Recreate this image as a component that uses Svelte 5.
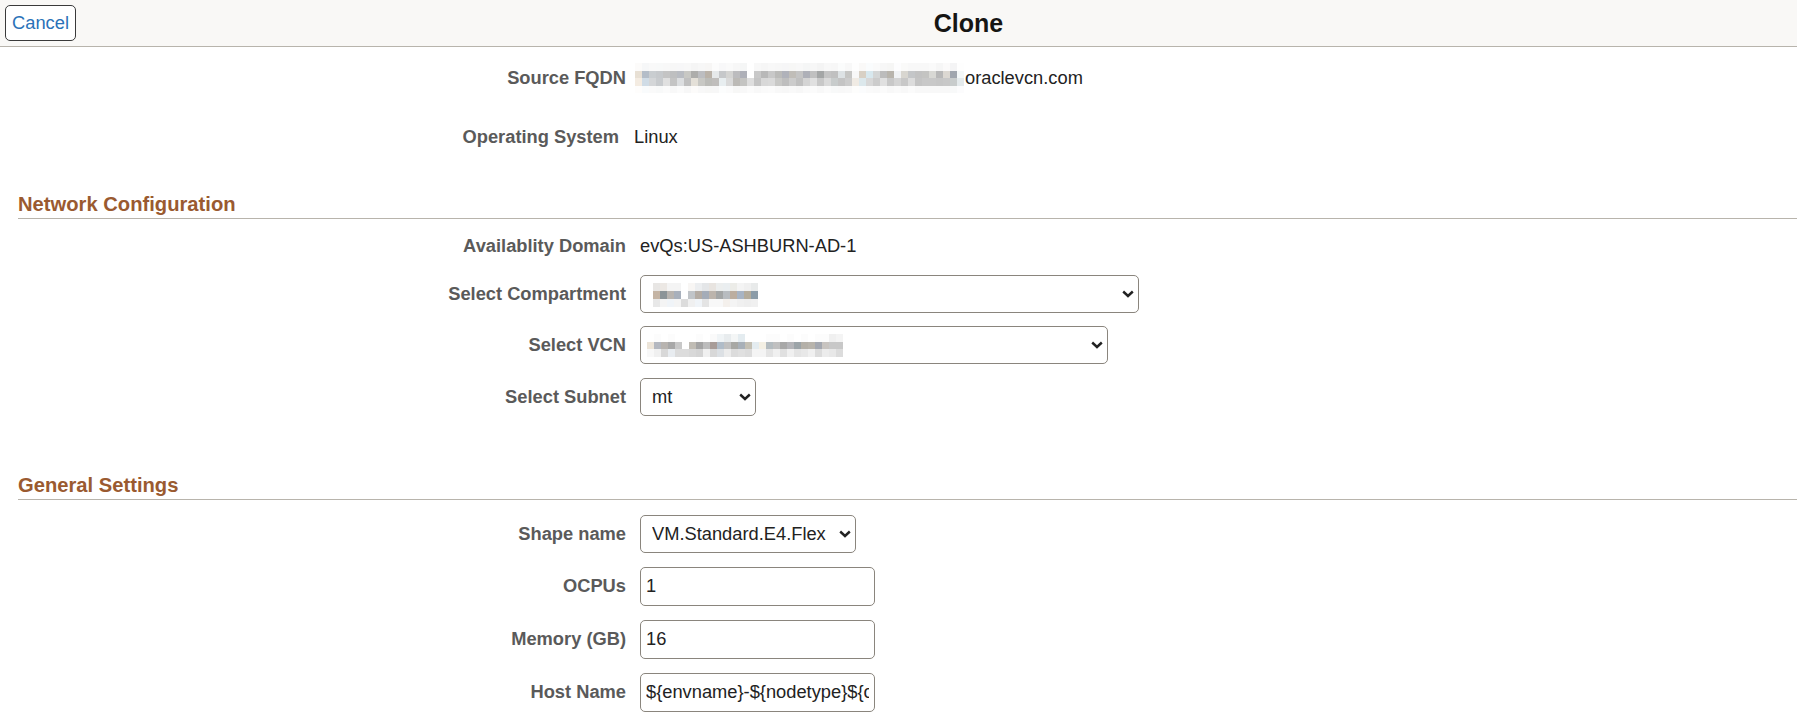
<script>
  // pixelated (redacted) strings, one array per row of blocks
  const fqdn = [
    "e8e0d4 b4bdc8 c9cdd0 c6c9cc c4c4c4 bebfc0 b9bcc2 c8c8c4 adadab bcbdc0 bab2a8 e6e9ea c6c8ca d4d4d2 bcbcbe aeb0b8 ffffff c8c8c8 b8b8b8 c8c8c8 bbbbb9 b0b2ba c0bdb8 c4c4c4 aeb0b8 c0c0c0 a4a6a6 c4c4c4 c0c0c0 dde2e4 c6c6c4 f8f8f8 d8d0c4 d8e8ee d4d6d6 bcbcbc b8b4ac f0f2f4 d8d6d0 c4c6c8 c2c2c2 c4c4c2 d8d8d4 b8b8b8 dcd8d2 a0a6ae f4f8f8",
    "f4ece2 d0dce6 d4d6d8 c8cbce e0e0e0 c4c4c4 dcdee0 c0c0c0 e4e0d8 c8c8c4 bcbcb8 c0bebc e8eef0 dadada bcbab6 c4c4c2 dedede c4c4c4 d8d8d8 dadada c8c8c6 bebebe cccccc c0c0c0 d4d4d4 e0e0e0 c8c8c8 dadada c8cccc c4c4c4 cccccc f0ebe4 dce8ec d8d8d8 cccccc e0e0e0 c8c8c8 d4d4d4 c8c8c8 dcdcdc c4c4c4 c8c8c8 c8c8c8 c6c6c6 c8c8c8 c8cccc e4eaec"
  ].map((r) => r.split(" "));

  const compartment = [
    "e8e6e4 ece8e4 f4f4f4 f4f4f4 ffffff f8f6f4 eceef0 e4e6e8 e8e4e0 eceeee eaeef0 ecece8 f4f4f4 f0f0f0 e8eaea",
    "c4b4a4 8c9498 b8b4b0 a8b0bc ffffff c0c4c8 b4aca4 a4acb8 bcb4ac a4a6a6 b8bcc0 bcaea0 a8b4c4 b4ac9c 8c9ca8",
    "e8e8e8 f4f4f4 f0f4f8 f4f4f4 dcdcdc f0f0f0 f0f4f8 e4e4e4 f8f8f8 f8f8f8 f4f0ec f4f4f4 f0f0f0 eeeeee f0f0f0"
  ].map((r) => r.split(" "));

  const vcn = [
    "ffffff fcfcfc ffffff fcfcfc ffffff ffffff ffffff fcfcfc ffffff fafafa f0f4f6 e8ecee f4f6f6 e4ecf0 ffffff ffffff ffffff fcfcfc fcfcfc ffffff fcfcfc ffffff fcfcfc ffffff fcfcfc fcfcfc f0f0f0 f4f4f4",
    "ece4d8 b4b8c0 b8b4b0 a8a8a8 c8c8c8 ffffff c0bcb4 a4a4a4 bcbcbc a89c98 b0bcc8 c0c0c0 a8a8a4 a8b0b8 c4c0b4 e4ecf0 f4f0e4 b4bcc0 c0c0c0 a8a8a8 b4b4b8 9ca4a8 b4b0a8 b8b4ac a4a8b0 c8c4c0 c8c8c8 c8c8c8",
    "f8f8f8 f0f0f0 d8d8d8 e8ecf0 dcdcdc dcdcdc d8d8d8 d4d4d4 f0f0f0 d8d8d8 dce0e4 ececec dcdcdc e0e0e0 dcdcdc f4f4f4 f4f4f4 e4e4e4 f0f0f0 e0e0e0 f0f0f0 e4e4e4 e8e8e8 f0f0f0 dcdcdc ececec e8e8e8 dcdcdc"
  ].map((r) => r.split(" "));

  const shade = (c) =>
    c.match(/../g).map((h) => Math.round(255 - (255 - parseInt(h, 16)) * 0.12).toString(16).padStart(2, "0")).join("");

  // fqdn has a faint halo above and below its two solid rows
  const fqdnRows = [fqdn[0].map(shade), fqdn[0], fqdn[1], fqdn[1].map(shade)];
</script>

{#snippet blur(rows, h)}
  <svg class="blur" width={rows[0].length * 7} height={rows.length * h} shape-rendering="crispEdges" aria-hidden="true">
    {#each rows as row, y}
      {#each row as c, x}
        <rect x={x * 7} y={y * h} width="7" height={h} fill={"#" + c} />
      {/each}
    {/each}
  </svg>
{/snippet}

{#snippet chevron()}
  <svg class="chevron" width="12" height="8" viewBox="0 0 12 8" aria-hidden="true">
    <path d="M1.2 1.5 6 6 10.8 1.5" fill="none" stroke="#222" stroke-width="2.4" />
  </svg>
{/snippet}

<header>
  <button class="cancel">Cancel</button>
  <h1>Clone</h1>
</header>

<main>
  <section class="source">
    <div class="row">
      <span class="label">Source FQDN</span>
      <span class="value fqdn">{@render blur(fqdnRows, 7.5)}<span class="domain">oraclevcn.com</span></span>
    </div>
    <div class="row os">
      <span class="label">Operating System</span>
      <span class="value">Linux</span>
    </div>
  </section>

  <h2 class="first">Network Configuration</h2>
  <section class="fields network">
    <div class="row">
      <span class="label">Availablity Domain</span>
      <span class="value">evQs:US-ASHBURN-AD-1</span>
    </div>
    <div class="row">
      <span class="label">Select Compartment</span>
      <div class="select wide">
        <select aria-label="Select Compartment"><option></option></select>
        <span class="mask compartment">{@render blur(compartment, 8)}</span>
        {@render chevron()}
      </div>
    </div>
    <div class="row">
      <span class="label">Select VCN</span>
      <div class="select vcn">
        <select aria-label="Select VCN"><option></option></select>
        <span class="mask vcn-mask">{@render blur(vcn, 7.7)}</span>
        {@render chevron()}
      </div>
    </div>
    <div class="row">
      <span class="label">Select Subnet</span>
      <div class="select subnet">
        <select aria-label="Select Subnet"><option>mt</option></select>
        {@render chevron()}
      </div>
    </div>
  </section>

  <h2 class="second">General Settings</h2>
  <section class="fields general">
    <div class="row">
      <span class="label">Shape name</span>
      <div class="select shape">
        <select aria-label="Shape name"><option>VM.Standard.E4.Flex</option></select>
        {@render chevron()}
      </div>
    </div>
    <div class="row">
      <span class="label">OCPUs</span>
      <input value="1" aria-label="OCPUs" />
    </div>
    <div class="row">
      <span class="label">Memory (GB)</span>
      <input value="16" aria-label="Memory (GB)" />
    </div>
    <div class="row">
      <span class="label">Host Name</span>
      <input value={"${envname}-${nodetype}${count}"} aria-label="Host Name" />
    </div>
  </section>
</main>

<style>
  :global(body) {
    background: #fff;
    font-family: "Liberation Sans", Arial, sans-serif;
    font-size: 18.3px;
    color: #222;
  }

  header {
    display: flex;
    align-items: center;
    height: 46px;
    padding-left: 5px;
    background: #f9f8f6;
    border-bottom: 1px solid #b8b4ac;
  }

  .cancel {
    flex: none;
    height: 36px;
    width: 71px;
    padding: 0;
    background: #fff;
    border: 1px solid #3a3a3a;
    border-radius: 5px;
    color: #2a72b8;
    font: inherit;
  }

  h1 {
    flex: 1;
    margin: 0 0 0 64px;
    text-align: center;
    font-size: 25px;
    font-weight: bold;
    color: #161513;
  }

  h2 {
    margin: 0 0 0 18px;
    padding-bottom: 2px;
    font-size: 20.2px;
    line-height: 24px;
    color: #9a5a30;
    border-bottom: 1px solid #b8b4ac;
  }

  h2.first { margin-top: 36px; }
  h2.second { margin-top: 57px; }

  .row {
    display: flex;
    align-items: center;
    gap: 14px;
    min-height: 38px;
  }

  .label {
    flex: none;
    width: 626px;
    text-align: right;
    font-weight: bold;
    color: #5a5a5a;
  }

  .source { padding-top: 12px; }
  .source .row { gap: 9px; }
  .source .label { width: 626px; }
  .source .os { margin-top: 21px; gap: 15px; }
  .source .os .label { width: 619px; }

  .fields {
    display: flex;
    flex-direction: column;
  }

  .network { gap: 13.5px; padding-top: 8px; }
  .network .row:first-child { margin-bottom: -4px; }
  .general { gap: 14px; padding-top: 15px; }

  .value { white-space: nowrap; }
  .fqdn { display: flex; align-items: center; }
  .domain { margin-left: 1px; }
  .blur { display: block; }

  .select {
    position: relative;
    height: 38px;
  }

  .select.wide { width: 499px; }
  .select.vcn { width: 468px; }
  .select.subnet { width: 116px; }
  .select.shape { width: 216px; }

  select {
    appearance: none;
    display: block;
    width: 100%;
    height: 100%;
    box-sizing: border-box;
    padding: 0 0 0 11px;
    background: #fff;
    border: 1px solid #8a857d;
    border-radius: 5px;
    color: #222;
    font: inherit;
  }

  .chevron {
    position: absolute;
    right: 5px;
    top: 15px;
    pointer-events: none;
  }

  .mask {
    position: absolute;
    pointer-events: none;
  }

  .compartment { left: 13px; top: 8px; }
  .vcn-mask { left: 7px; top: 8px; }

  input {
    display: block;
    width: 235px;
    height: 39px;
    box-sizing: border-box;
    padding: 0 5px;
    background: #fff;
    border: 1px solid #8a857d;
    border-radius: 5px;
    color: #222;
    font: inherit;
  }
</style>
